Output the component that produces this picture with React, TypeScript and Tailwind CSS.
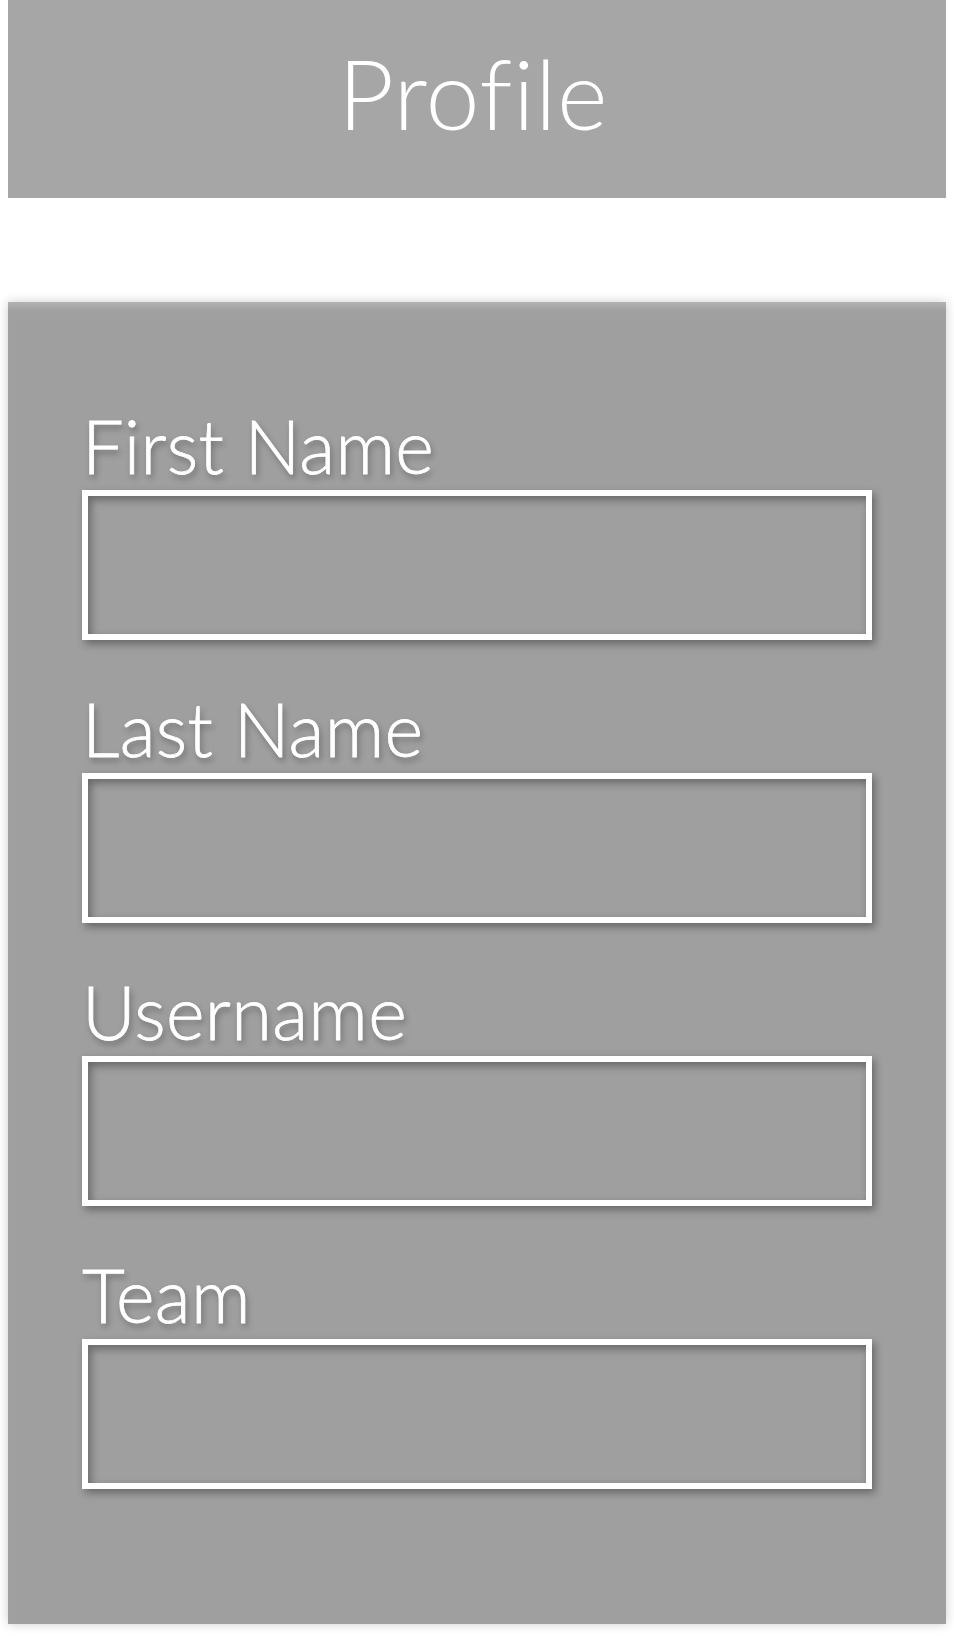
import React from "react";

const fields = ["First Name", "Last Name", "Username", "Team"];

export default function App() {
  return (
    <div className="min-h-[1636px] bg-white pt-0" style={{ fontFamily: "Lato, 'Open Sans', sans-serif" }}>
      <div className="mx-2 flex h-[198px] items-center justify-center bg-[#a6a6a6] pb-[14px] pr-[8px]">
        <h1 className="text-[97px] font-light leading-none tracking-[0.5px] text-white">Profile</h1>
      </div>
      <div className="mx-2 mt-[104px] h-[1322px] bg-[#9f9f9f] px-[74px] pt-[102px] shadow-[0_0_10px_rgba(0,0,0,0.2),inset_0_10px_8px_-6px_rgba(255,255,255,0.25)]">
        <div className="flex flex-col gap-[47px]">
          {fields.map((f) => (
            <div key={f} className="flex flex-col">
              <label className="h-[84px] text-[74px] font-light leading-[84px] tracking-[0.3px] text-white [-webkit-text-stroke:0.8px_white] [text-shadow:2px_4px_6px_rgba(0,0,0,0.35)]">
                {f}
              </label>
              <div className="mt-[2px] h-[150px] border-[6px] border-white bg-[#9f9f9f] shadow-[3px_4px_8px_rgba(0,0,0,0.35),inset_3px_4px_8px_rgba(0,0,0,0.35)]" />
            </div>
          ))}
        </div>
      </div>
    </div>
  );
}
